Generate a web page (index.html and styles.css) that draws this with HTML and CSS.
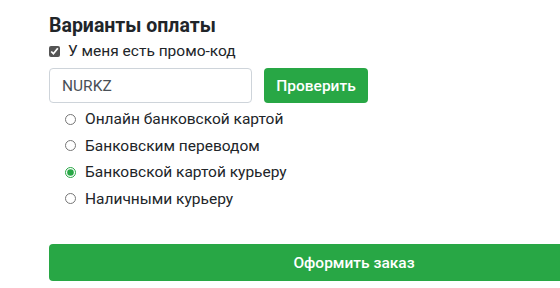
FILE: index.html
```html
<!DOCTYPE html>
<html lang="ru">
<head>
<meta charset="utf-8">
<link rel="stylesheet" href="styles.css">
</head>
<body>
<div class="page">
  <h3 class="title">Варианты оплаты</h3>
  <label class="promo-check"><input type="checkbox" checked> У меня есть промо-код</label>
  <div class="promo-row">
    <input class="promo-input" type="text" value="NURKZ">
    <button class="btn btn-check">Проверить</button>
  </div>
  <div class="methods">
    <label class="method"><input type="radio" name="pay"> Онлайн банковской картой</label>
    <label class="method"><input type="radio" name="pay"> Банковским переводом</label>
    <label class="method"><input type="radio" name="pay" checked> Банковской картой курьеру</label>
    <label class="method"><input type="radio" name="pay"> Наличными курьеру</label>
  </div>
  <button class="btn btn-order">Оформить заказ</button>
</div>
</body>
</html>
```
FILE: styles.css
```css
html, body {
  margin: 0;
  padding: 0;
  background: #fff;
  overflow: hidden;
}
body {
  font-family: Roboto, "Noto Sans", sans-serif;
  color: #212529;
  width: 560px;
  height: 288px;
}
.page {
  padding: 14px 0 0 49px;
  display: flex;
  flex-direction: column;
  align-items: flex-start;
}
.title {
  margin: 0;
  font-size: 19.5px;
  font-weight: 700;
  line-height: 24px;
}
.promo-check {
  display: flex;
  align-items: center;
  font-size: 15.5px;
  line-height: 20px;
  margin-top: 3px;
}
.promo-check input {
  margin: 0 8px 0 0;
  width: 11px;
  height: 11px;
  accent-color: #555;
}
.promo-row {
  display: flex;
  gap: 12px;
  margin-top: 7px;
}
.promo-input {
  box-sizing: border-box;
  width: 203px;
  height: 35px;
  border: 1px solid #ced4da;
  border-radius: 4px;
  padding: 0 12px;
  font-family: inherit;
  font-size: 15.5px;
  color: #495057;
}
.btn {
  border: none;
  background: #28a745;
  color: #fff;
  font-family: inherit;
  font-size: 15.5px;
  border-radius: 4px;
  flex-shrink: 0;
}
.btn-check {
  width: 104px;
  height: 35px;
  font-weight: 500;
}
.methods {
  display: flex;
  flex-direction: column;
  padding-left: 16px;
  margin-top: 3px;
}
.method {
  display: flex;
  align-items: center;
  font-size: 15.5px;
  line-height: 20px;
  height: 26.5px;
}
.method input {
  margin: 0 9px 0 0;
  width: 11px;
  height: 11px;
  accent-color: #28a745;
}
.btn-order {
  margin-top: 32px;
  width: 610px;
  height: 37px;
  font-weight: 500;
}
```
